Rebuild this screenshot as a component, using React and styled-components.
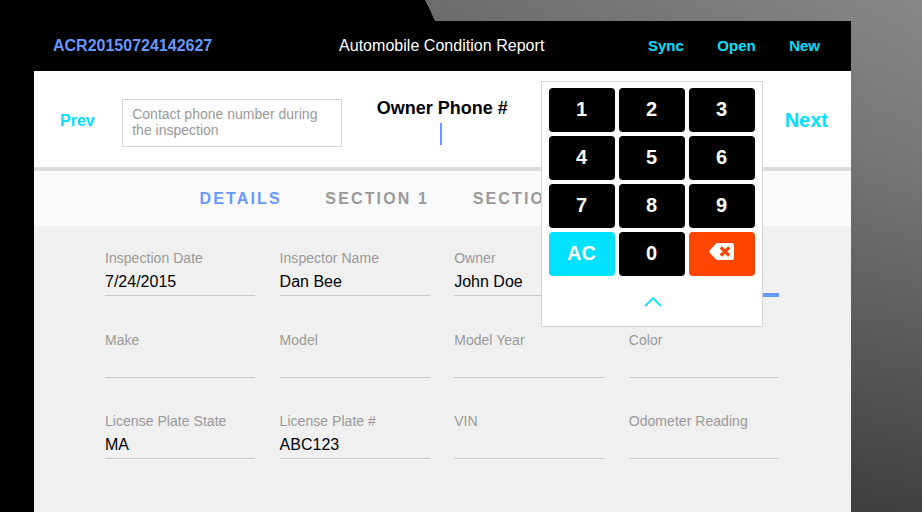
import React from "react";
import styled, { createGlobalStyle } from "styled-components";

const GlobalStyle = createGlobalStyle`
  * { box-sizing: border-box; }
  body { margin: 0; overflow: hidden; font-family: "Liberation Sans", Arial, sans-serif; }
  button { font-family: inherit; border: 0; padding: 0; background: none; cursor: pointer; }
`;

const Desktop = styled.div`
  width: 922px;
  height: 512px;
  padding: 21px 0 0 34px;
  overflow: hidden;
  background:
    linear-gradient(#000, #000) 0 0 / 425px 100% no-repeat,
    linear-gradient(64.5deg, #000 50%, transparent 51%) 425px 0 / 10px 21px no-repeat,
    linear-gradient(90deg, rgba(0, 0, 0, 0.2) 430px, rgba(0, 0, 0, 0) 922px),
    linear-gradient(#878787 0%, #787878 30%, #5f5f5f 62%, #404040 100%);
`;

const Window = styled.main`
  width: 817px;
  height: 491px;
  display: flex;
  flex-direction: column;
  background: #f0f0f0;
`;

const Header = styled.header`
  height: 50px;
  flex: none;
  display: flex;
  align-items: center;
  background: #000;
  color: #fff;
  padding: 0 31px 0 19px;
`;

const ReportId = styled.div`
  width: 286px;
  font-size: 16px;
  font-weight: bold;
  color: #6699ff;
`;

const Title = styled.h1`
  margin: 0;
  flex: 1;
  font-size: 16px;
  font-weight: normal;
  letter-spacing: 0.03px;
`;

const Actions = styled.nav`
  display: flex;
  gap: 33.5px;
  padding-bottom: 1px;
`;

const Action = styled.button`
  font-size: 15px;
  font-weight: bold;
  color: #00e0ff;
`;

const Prompt = styled.section`
  position: relative;
  height: 100px;
  flex: none;
  display: flex;
  align-items: flex-start;
  background: #fff;
  border-bottom: 4px solid #dcdcdc;
  padding: 0 23px 0 26px;
`;

const Step = styled.button`
  height: ${(p) => (p.$large ? 98 : 99)}px;
  font-size: ${(p) => (p.$large ? 20 : 16)}px;
  font-weight: bold;
  color: #00e0ff;
`;

const Hint = styled.p`
  width: 220px;
  height: 48px;
  margin: 28px 35px 0 27px;
  padding: 6px 9.5px;
  border: 1px solid #d6d6d6;
  font-size: 14px;
  line-height: 16px;
  color: #999;
`;

const Question = styled.div`
  flex: 1;
  display: flex;
  flex-direction: column;
  align-items: flex-start;
  padding-top: 26px;
`;

const QuestionLabel = styled.label`
  font-size: 18px;
  line-height: 22px;
  font-weight: bold;
  color: #000;
`;

const Caret = styled.span`
  width: 2px;
  height: 22px;
  margin: 4px 0 0 63px;
  background: #6699ff;
`;

const Keypad = styled.div`
  position: absolute;
  z-index: 2;
  left: 507px;
  top: 10px;
  width: 222px;
  height: 246px;
  padding: 6px 7px;
  background: #fff;
  border: 1px solid #d6d6d6;
`;

const Keys = styled.div`
  display: grid;
  grid-template-columns: repeat(3, 66px);
  grid-auto-rows: 44px;
  gap: 4px;
`;

const Key = styled.button`
  display: flex;
  align-items: center;
  justify-content: center;
  border-radius: 4px;
  padding: 0 1px 2px 0;
  font-size: 20px;
  font-weight: bold;
  color: #fff;
  background: ${(p) => p.$tone || "#000"};
`;

const DeleteKey = styled(Key)`
  padding-bottom: 5px;
`;

const Collapse = styled.button`
  display: flex;
  justify-content: center;
  width: 100%;
  padding: 21px 0 0 2px;
`;

const Tabs = styled.nav`
  height: 55px;
  flex: none;
  display: flex;
  align-items: center;
  gap: 43.5px;
  padding-left: 165.5px;
  background: #fafafa;
`;

const Tab = styled.button`
  font-size: 16px;
  font-weight: bold;
  letter-spacing: 2.15px;
  white-space: nowrap;
  color: ${(p) => (p.$active ? "#6699ff" : "#999")};
`;

const Form = styled.section`
  display: grid;
  grid-template-columns: repeat(4, 150px);
  column-gap: 24.6px;
  grid-auto-rows: 81.5px;
  padding: 24px 0 0 71px;
`;

const Field = styled.div`
  height: 46px;
  border-bottom: 1px solid #c8c8c8;
  ${(p) => p.$active && "height: 47px; border-bottom: 4px solid #6699ff;"}
`;

const Label = styled.div`
  font-size: 14px;
  line-height: 16px;
  letter-spacing: 0.04px;
  color: #999;
`;

const Value = styled.div`
  margin-top: 6px;
  font-size: 16px;
  line-height: 20px;
  color: #000;
`;

const fields = [
  { label: "Inspection Date", value: "7/24/2015" },
  { label: "Inspector Name", value: "Dan Bee" },
  { label: "Owner", value: "John Doe" },
  { active: true },
  { label: "Make" },
  { label: "Model" },
  { label: "Model Year" },
  { label: "Color" },
  { label: "License Plate State", value: "MA" },
  { label: "License Plate #", value: "ABC123" },
  { label: "VIN" },
  { label: "Odometer Reading" },
];

const digits = ["1", "2", "3", "4", "5", "6", "7", "8", "9"];

function BackspaceIcon() {
  return (
    <svg width="25" height="17" viewBox="0 0 25 17" aria-hidden="true">
      <path d="M9 0h13.500q2.500 0 2.500 2.500v12q0 2.500-2.500 2.500H9q-1.500 0-2.400-1L1 10Q-.3 8.500 1 7l5.600-6Q7.500 0 9 0z" fill="#fff" />
      <path d="M11.800 4.300l8.400 8.400M20.200 4.300l-8.400 8.400" stroke="#ff4500" strokeWidth="3.100" />
    </svg>
  );
}

function ChevronUpIcon() {
  return (
    <svg width="18" height="10" viewBox="0 0 18 10" aria-hidden="true">
      <path d="M1 9.200L9 1.200l8 8" fill="none" stroke="#00e0ff" strokeWidth="1.800" />
    </svg>
  );
}

export default function App() {
  return (
    <>
      <GlobalStyle />
      <Desktop>
        <Window>
          <Header>
            <ReportId>ACR20150724142627</ReportId>
            <Title>Automobile Condition Report</Title>
            <Actions>
              <Action>Sync</Action>
              <Action>Open</Action>
              <Action>New</Action>
            </Actions>
          </Header>
          <Prompt>
            <Step>Prev</Step>
            <Hint>Contact phone number during the inspection</Hint>
            <Question>
              <QuestionLabel>Owner Phone #</QuestionLabel>
              <Caret />
            </Question>
            <Step $large>Next</Step>
            <Keypad>
              <Keys>
                {digits.map((d) => (
                  <Key key={d}>{d}</Key>
                ))}
                <Key $tone="#00e0ff">AC</Key>
                <Key>0</Key>
                <DeleteKey $tone="#ff4500" aria-label="Backspace">
                  <BackspaceIcon />
                </DeleteKey>
              </Keys>
              <Collapse aria-label="Hide keypad">
                <ChevronUpIcon />
              </Collapse>
            </Keypad>
          </Prompt>
          <Tabs>
            <Tab $active>DETAILS</Tab>
            <Tab>SECTION 1</Tab>
            <Tab>SECTION 2</Tab>
          </Tabs>
          <Form>
            {fields.map((field, i) => (
              <Field key={i} $active={field.active}>
                <Label>{field.label}</Label>
                <Value>{field.value}</Value>
              </Field>
            ))}
          </Form>
        </Window>
      </Desktop>
    </>
  );
}
